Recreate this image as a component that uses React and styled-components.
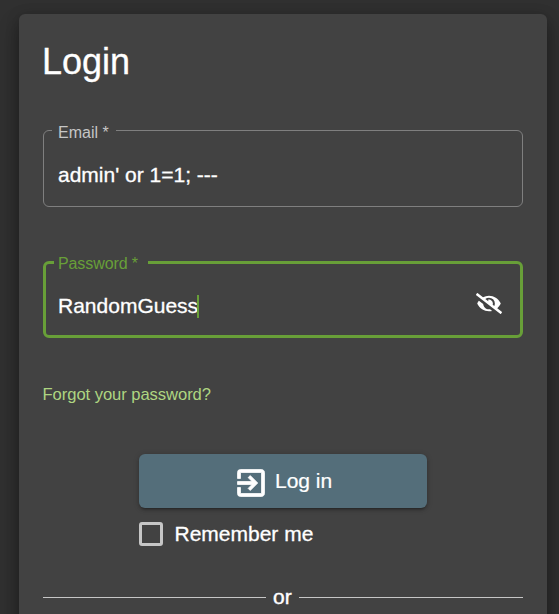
import React from 'react';
import styled, { createGlobalStyle } from 'styled-components';
import { FaEyeSlash } from 'react-icons/fa';
import { MdExitToApp } from 'react-icons/md';

const GlobalStyle = createGlobalStyle`
  * { box-sizing: border-box; }
  body {
    margin: 0;
    background: #303030;
    color: #fff;
    font-family: "Liberation Sans", Arial, sans-serif;
    overflow: hidden;
  }
`;

const Page = styled.main`
  height: 614px;
  padding: 14px 12px 0 19px;
  overflow: hidden;
`;

const Card = styled.section`
  height: 700px;
  padding: 24px;
  border-radius: 6px;
  background: #424242;
  box-shadow: 0 11px 20px 1px rgba(0, 0, 0, 0.3), 0 2px 14px rgba(0, 0, 0, 0.2);
`;

const Title = styled.h1`
  margin: 0 0 0 -1px;
  height: 84px;
  font-size: 36px;
  line-height: 48px;
  font-weight: 400;
  -webkit-text-stroke: 0.3px currentColor;
`;

const Field = styled.fieldset`
  display: flex;
  align-items: flex-start;
  justify-content: space-between;
  margin: 0 0 47px;
  min-width: 0;
  height: ${(p) => (p.$focused ? 84 : 85)}px;
  padding: 0 ${(p) => (p.$focused ? 18 : 14)}px 0 ${(p) => (p.$focused ? 12 : 14)}px;
  border: ${(p) => (p.$focused ? '3px solid #689f38' : '1px solid #7f7f7f')};
  border-radius: 6px;
`;

const Legend = styled.legend`
  width: ${(p) => p.$width}px;
  height: 17px;
  margin-left: ${(p) => p.$offset}px;
  padding: 0 0 0 ${(p) => p.$inset}px;
  color: ${(p) => (p.$focused ? '#689f38' : '#c6c6c6')};
  font-size: 16px;
  line-height: ${(p) => (p.$focused ? 20 : 22)}px;
  letter-spacing: ${(p) => p.$spacing || 0}px;
  white-space: nowrap;
`;

const Value = styled.span`
  display: flex;
  align-items: center;
  height: 24px;
  margin-top: ${(p) => p.$top}px;
  font-size: 21px;
  line-height: 24px;
  white-space: pre;
  -webkit-text-stroke: 0.3px currentColor;
`;

const Caret = styled.span`
  width: 2px;
  height: 23px;
  margin-left: -1px;
  background: #689f38;
`;

const HiddenIcon = styled(FaEyeSlash)`
  width: 26px;
  height: 21px;
  margin-top: 22px;
`;

const ForgotLink = styled.a`
  display: block;
  height: 69px;
  margin-left: -0.5px;
  color: #aed581;
  font-size: 16.6px;
  line-height: 20px;
  letter-spacing: -0.06px;
`;

const Actions = styled.div`
  width: 288px;
  margin: 0 auto;
`;

const LoginButton = styled.button`
  display: flex;
  align-items: center;
  width: 100%;
  height: 54px;
  padding: 0 0 0 93px;
  border: 0;
  border-radius: 6px;
  background: #546e7a;
  color: #fff;
  font: 21px "Liberation Sans", Arial, sans-serif;
  -webkit-text-stroke: 0.2px currentColor;
  box-shadow: 0 4px 2px -3px rgba(0, 0, 0, 0.2), 0 2px 3px rgba(0, 0, 0, 0.18), 0 1px 6px rgba(0, 0, 0, 0.16);
`;

const EnterIcon = styled(MdExitToApp)`
  width: 36px;
  height: 36px;
  margin: 4px 6px 0 1px;

  path {
    stroke: currentColor;
    stroke-width: 0.5px;
  }

  path[fill="none"] {
    stroke: none;
  }
`;

const Remember = styled.label`
  display: flex;
  align-items: center;
  gap: 11.5px;
  height: 24px;
  margin-top: 14px;
  font-size: 21px;
  line-height: 24px;
  -webkit-text-stroke: 0.3px currentColor;
`;

const Box = styled.span`
  width: 24px;
  height: 24px;
  border: 3px solid #c6c6c6;
  border-radius: 3px;
`;

const Divider = styled.div`
  display: flex;
  align-items: center;
  gap: 7px;
  height: 24px;
  margin-top: 39px;
  font-size: 21px;
  line-height: 24px;
  -webkit-text-stroke: 0.4px currentColor;
`;

const Rule = styled.span`
  flex: ${(p) => (p.$width ? `0 0 ${p.$width}px` : '1')};
  height: 1px;
  background: #c6c6c6;
`;

export default function App() {
  return (
    <>
      <GlobalStyle />
      <Page>
        <Card>
          <Title>Login</Title>
          <Field>
            <Legend $width={64} $offset={-6} $inset={6}>Email *</Legend>
            <Value $top={24}>admin' or 1=1; ---</Value>
          </Field>
          <Field $focused>
            <Legend $focused $width={94} $offset={-4} $inset={4} $spacing={-0.1}>Password *</Legend>
            <Value $top={23}>RandomGuess<Caret /></Value>
            <HiddenIcon />
          </Field>
          <ForgotLink>Forgot your password?</ForgotLink>
          <Actions>
            <LoginButton><EnterIcon />Log in</LoginButton>
            <Remember><Box />Remember me</Remember>
          </Actions>
          <Divider>
            <Rule $width={223} />
            <span>or</span>
            <Rule />
          </Divider>
        </Card>
      </Page>
    </>
  );
}
